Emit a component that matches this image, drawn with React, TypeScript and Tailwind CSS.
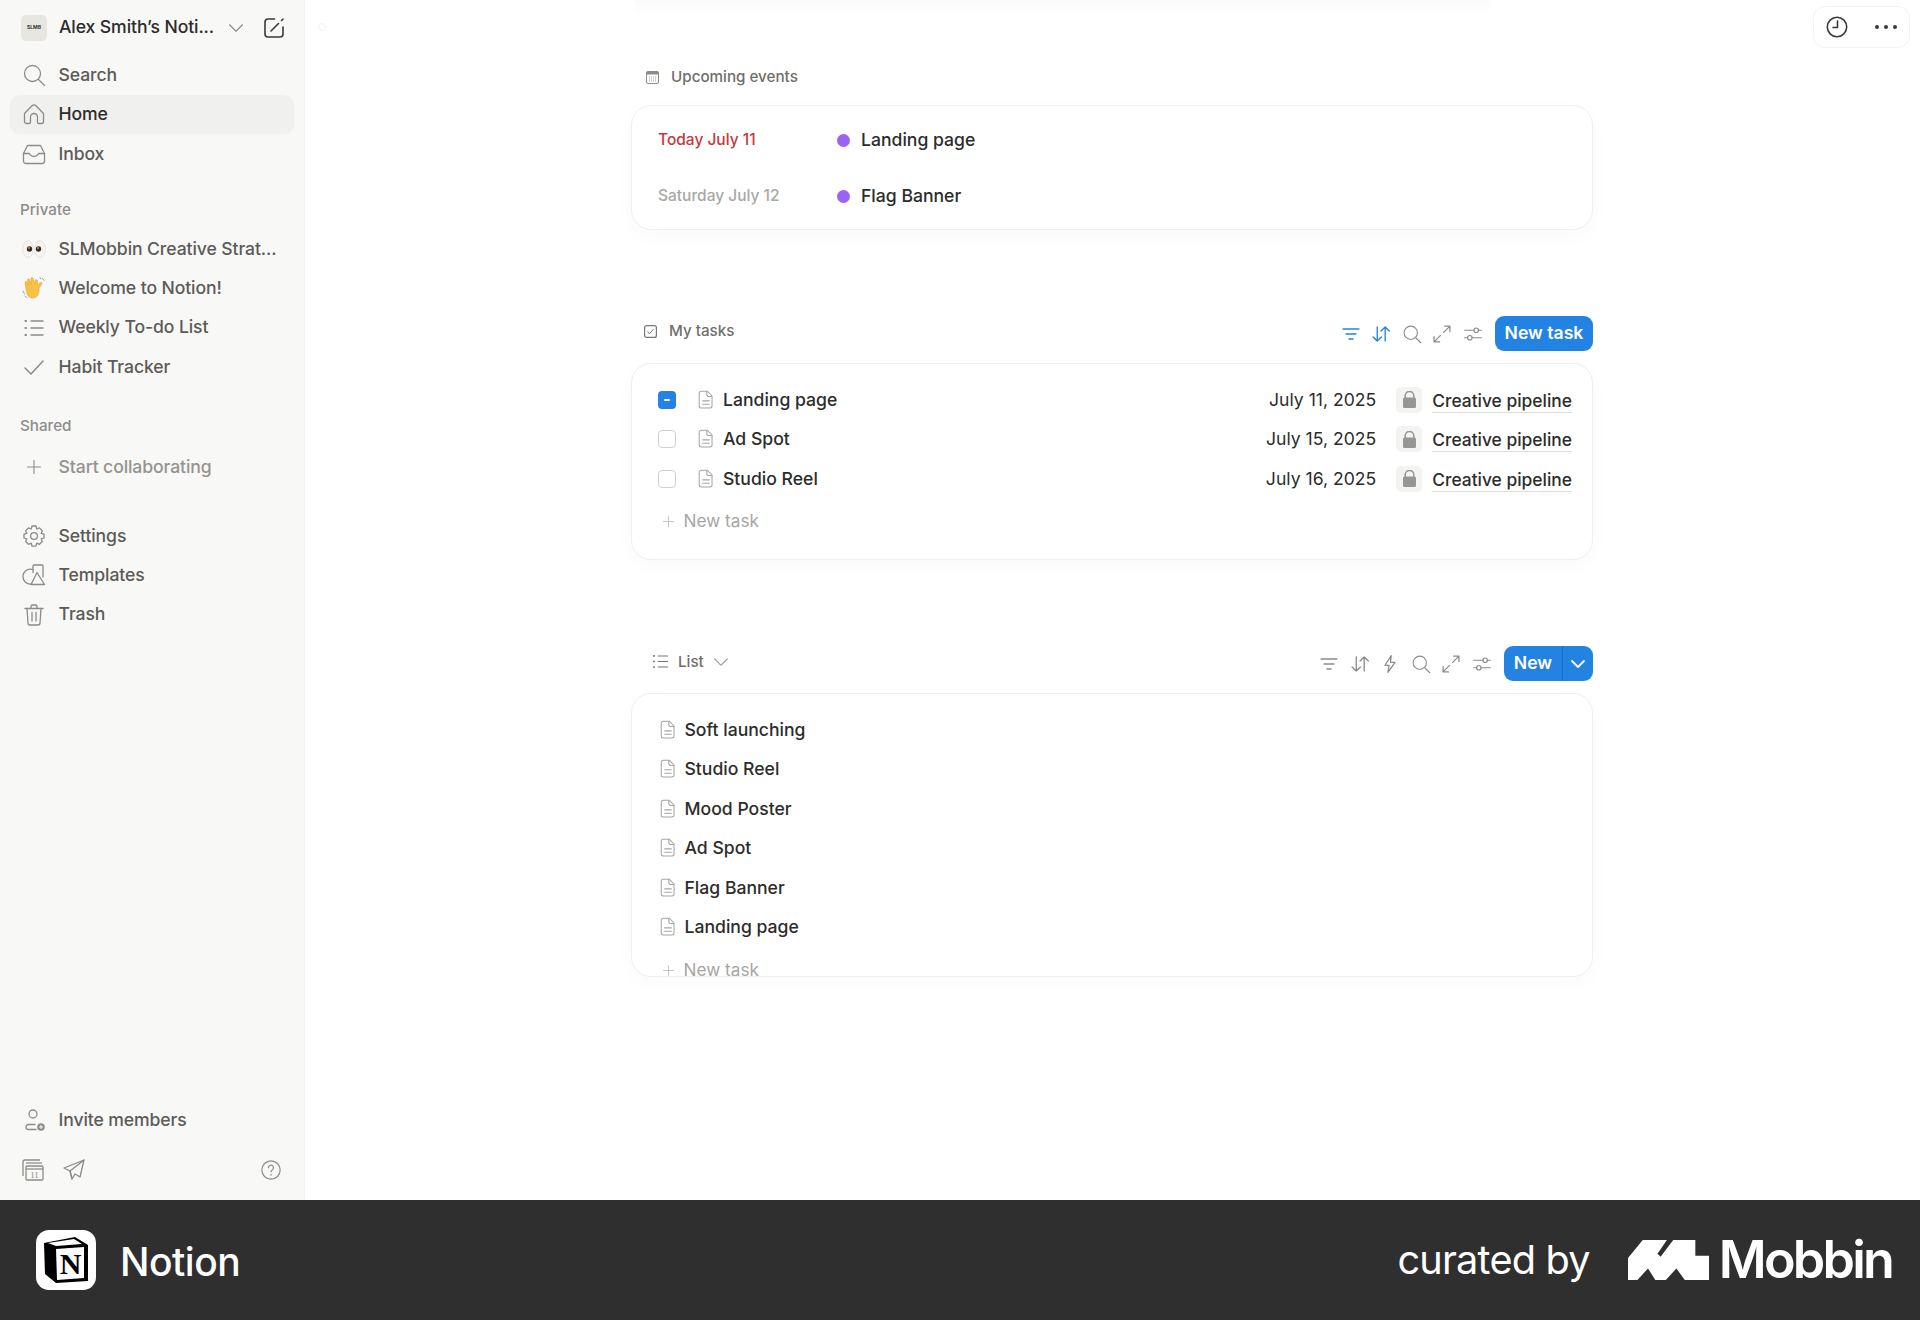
import React from "react";
import { ChevronDown, Plus } from "lucide-react";

const Svg: React.FC<{ size?: number; className?: string; sw?: number; vb?: number; children: React.ReactNode }> = ({
  size = 24,
  className = "text-[#8b8b88]",
  sw = 1.3,
  vb = 24,
  children,
}) => (
  <svg
    width={size}
    height={size}
    viewBox={`0 0 ${vb} ${vb}`}
    fill="none"
    stroke="currentColor"
    strokeWidth={sw}
    strokeLinecap="round"
    strokeLinejoin="round"
    className={`shrink-0 ${className}`}
  >
    {children}
  </svg>
);

const SearchIcon = ({ size = 24, className }: { size?: number; className?: string }) => (
  <Svg size={size} className={className}>
    <circle cx="10.5" cy="10.5" r="8" />
    <path d="M16.5 16.5 22.5 22.5" />
  </Svg>
);
const HomeIcon = () => (
  <Svg>
    <path d="M2.5 11.5 10 3.8a2.8 2.8 0 0 1 4 0l7.5 7.7v8a2 2 0 0 1-2 2h-2.7a1.3 1.3 0 0 1-1.3-1.3v-5.2a3.5 3.5 0 0 0-7 0v5.2a1.3 1.3 0 0 1-1.3 1.3H4.5a2 2 0 0 1-2-2z" />
  </Svg>
);
const InboxIcon = () => (
  <Svg>
    <path d="M5.5 3.5h13l4 8v7.5a2.5 2.5 0 0 1-2.500 2.500H4A2.500 2.500 0 0 1 1.500 19v-7.500z" />
    <path d="M1.500 11.500H7c1 0 1.200 3 5 3s4-3 5-3h5.500" />
  </Svg>
);
const ListIcon = ({ size = 24, className }: { size?: number; className?: string }) => (
  <Svg size={size} className={className} sw={1.4}>
    <path d="M9 5h12M9 12h12M9 19h12" />
    <path d="M3.500 5h.5M3.500 12h.5M3.500 19h.5" strokeWidth={2.2} />
  </Svg>
);
const GearIcon = () => (
  <Svg>
    <circle cx="12" cy="12" r="3.400" />
    <path d="M10 2h4l.8 3 2.700-1.100 2.800 2.800L19.200 9.400l2.800 .8v3.800l-2.800 .8 1.100 2.700-2.800 2.800-2.700-1.100-.8 3h-4l-.8-3-2.700 1.100-2.800-2.800 1.100-2.700L2 14v-3.800l2.800-.8L3.700 6.700l2.800-2.800L9.200 5z" />
  </Svg>
);
const TemplatesIcon = () => (
  <Svg>
    <path d="M11 6.500A7.500 7.500 0 1 0 9.500 21" />
    <path d="M11 9.500V3a1 1 0 0 1 1-1h8a1 1 0 0 1 1 1v11" />
    <path d="M15 9.500 22.500 21.500H9z" />
  </Svg>
);
const TrashIcon = () => (
  <Svg>
    <path d="M3 5.500h18M9 5V3.500A1.500 1.500 0 0 1 10.500 2h3A1.500 1.500 0 0 1 15 3.500V5" />
    <path d="M5 5.500 6 20a2 2 0 0 0 2 2h8a2 2 0 0 0 2-2l1-14.500" />
    <path d="M10 9.500v8.500M14 9.500v8.500" />
  </Svg>
);
const InviteIcon = () => (
  <Svg>
    <circle cx="11" cy="6" r="4" />
    <path d="M13 16.500H6.500a2.500 2.500 0 0 0 0 5H14" />
    <circle cx="19" cy="19" r="3.800" fill="currentColor" stroke="none" />
    <path d="M19 17.300v3.400M17.300 19h3.400" stroke="#f8f8f7" strokeWidth={1} />
  </Svg>
);
const FileIcon = () => (
  <Svg size={20} sw={1.3} className="text-[#a5a5a2]">
    <path d="M5.500 1.500h7.500l6 6v12.500a2.500 2.500 0 0 1-2.500 2.500h-11A2.500 2.500 0 0 1 3 20V4a2.500 2.500 0 0 1 2.500-2.500z" transform="translate(1 0) scale(.96)" />
    <path d="M13 1.800v4a2 2 0 0 0 2 2h4" />
    <path d="M8 13h8M8 17h8" />
  </Svg>
);
const FilterIcon = ({ className }: { className?: string }) => (
  <Svg size={20} sw={1.6} className={className}>
    <path d="M2.500 6h19M6 12h12M9.500 18h5" />
  </Svg>
);
const SortIcon = ({ className }: { className?: string }) => (
  <Svg size={20} sw={1.6} className={className}>
    <path d="M7.500 3.500v17M2.500 15.500l5 5 5-5" />
    <path d="M17 20.500v-17M12 8.500l5-5 5 5" />
  </Svg>
);
const BoltIcon = () => (
  <Svg size={20} sw={1.5}>
    <path d="M13.500 2 6 13.500h5L9.500 22 18 10h-5.500z" />
  </Svg>
);
const ExpandIcon = () => (
  <Svg size={20} sw={1.5}>
    <path d="M14 10 21.500 2.500M15 2.500h6.500V9" />
    <path d="M10 14 2.500 21.500M2.500 15v6.500H9" />
  </Svg>
);
const SlidersIcon = () => (
  <Svg size={20} sw={1.4}>
    <path d="M2 7.500h11M18.500 7.500H22M2 16.500h3.500M11 16.500h11" />
    <circle cx="15.800" cy="7.500" r="2.700" />
    <circle cx="8.200" cy="16.500" r="2.700" />
  </Svg>
);
const LockIcon = () => (
  <svg width="15" height="17" viewBox="0 0 15 17" className="shrink-0">
    <path d="M3.200 7V4.700a4.300 4.300 0 0 1 8.600 0V7" fill="none" stroke="#969694" strokeWidth="1.500" />
    <rect x="1" y="6.500" width="13" height="10.500" rx="1.500" fill="#969694" />
  </svg>
);

const Eyes = () => (
  <svg width="24" height="24" viewBox="0 0 24 24" className="shrink-0">
    <ellipse cx="6" cy="12" rx="5.300" ry="8.500" fill="#f6f4f0" stroke="#d9d6d0" strokeWidth=".6" />
    <ellipse cx="18" cy="12" rx="5.300" ry="8.500" fill="#f6f4f0" stroke="#d9d6d0" strokeWidth=".6" />
    <circle cx="7.500" cy="12" r="2.700" fill="#3d2a1c" />
    <circle cx="16.500" cy="12" r="2.700" fill="#3d2a1c" />
    <circle cx="7" cy="11" r=".7" fill="#fff" />
    <circle cx="16" cy="11" r=".7" fill="#fff" />
  </svg>
);

const Wave = () => (
  <svg width="24" height="24" viewBox="0 0 24 24" className="shrink-0">
    <path d="M4 12.500 3 6.800c-.3-1.500 1.700-2 2.200-.6l1 3 -.8-5c-.2-1.500 1.900-1.900 2.300-.4l1.300 4.700L8.900 2.900C8.700 1.400 10.800 1 11.200 2.500l1.700 5.800 .2-3.600c.2-1.500 2.200-1.400 2.300 .1l.5 4 2.200-2.300c1.100-1 2.500 .2 1.700 1.400l-2.800 4.400c.8 5-1.700 9.700-6.300 9.700-4.800 0-6.300-4.500-6.700-9.800z" fill="#f7c14a" stroke="#e5a12a" strokeWidth=".5" />
    <path d="M1 15l1.500 3M3 20l1.500 1.500M20.500 2.500l1.500 2M18 1.500l.8 1.500" stroke="#8d8d8a" strokeWidth=".8" fill="none" strokeLinecap="round" />
  </svg>
);

const NavRow: React.FC<{ icon: React.ReactNode; label: string; active?: boolean; muted?: boolean }> = ({
  icon,
  label,
  active,
  muted,
}) => (
  <div
    className={`flex h-[39.3px] items-center gap-[12.5px] rounded-[10px] px-3 text-[17.6px] font-medium tracking-[-0.1px] ${
      active ? "bg-[#f0f0ef] text-[#2c2c2b]" : muted ? "text-[#94938f]" : "text-[#5c5b58]"
    }`}
  >
    <span className="flex w-6 items-center justify-center">{icon}</span>
    <span className="whitespace-nowrap">{label}</span>
  </div>
);

const SectionLabel: React.FC<{ children: React.ReactNode }> = ({ children }) => (
  <div className="flex h-[39px] items-center px-[10px] pt-[1px] text-[15.2px] font-medium text-[#8d8c88]">{children}</div>
);

const Sidebar = () => (
  <aside className="flex h-full w-[305px] shrink-0 flex-col border-r border-[#f2f2f1] bg-[#f8f8f7] px-[10px] pt-[7.5px]">
    <div className="mb-[9px] flex h-[39px] items-center pl-[11px] pt-[1px]">
      <div className="flex h-[26px] w-[26px] shrink-0 items-center justify-center rounded-[5px] bg-[#e7e6e1] text-[5px] font-bold text-[#333]">
        SLMB
      </div>
      <span className="ml-3 w-[156px] shrink-0 whitespace-nowrap text-[17.6px] font-medium tracking-[-0.1px] text-[#2c2c2b]">
        Alex Smith’s Noti...
      </span>
      <ChevronDown size={26} strokeWidth={1} className="ml-[8px] shrink-0 text-[#8b8b88]" />
      <svg width="24" height="24" viewBox="0 0 24 24" fill="none" stroke="#3a3a38" strokeWidth="1.600" strokeLinecap="round" strokeLinejoin="round" className="ml-[13px] shrink-0">
        <path d="M12.500 3H6a3 3 0 0 0-3 3v12a3 3 0 0 0 3 3h12a3 3 0 0 0 3-3v-7" />
        <path d="M9 15 16.500 7.500" />
        <path d="M19.500 4.500 21 3" />
      </svg>
    </div>
    <NavRow icon={<SearchIcon />} label="Search" />
    <NavRow icon={<HomeIcon />} label="Home" active />
    <NavRow icon={<InboxIcon />} label="Inbox" />

    <div className="mt-[17px]">
      <SectionLabel>Private</SectionLabel>
    </div>
    <NavRow icon={<Eyes />} label="SLMobbin Creative Strat..." />
    <NavRow icon={<Wave />} label="Welcome to Notion!" />
    <NavRow icon={<ListIcon />} label="Weekly To-do List" />
    <NavRow
      icon={
        <Svg sw={1.5}>
          <path d="M3 13 9 19 21 6" />
        </Svg>
      }
      label="Habit Tracker"
    />

    <div className="mt-[20px]">
      <SectionLabel>Shared</SectionLabel>
    </div>
    <div className="mt-[2px]">
      <NavRow icon={<Plus size={22} strokeWidth={1.2} className="text-[#8b8b88]" />} label="Start collaborating" muted />
    </div>

    <div className="mt-[29.5px]">
      <NavRow icon={<GearIcon />} label="Settings" />
      <NavRow icon={<TemplatesIcon />} label="Templates" />
      <NavRow icon={<TrashIcon />} label="Trash" />
    </div>

    <div className="mt-auto">
      <NavRow icon={<InviteIcon />} label="Invite members" />
      <div className="mb-[11px] mt-[10px] flex h-[39px] items-center px-3">
        <svg width="22" height="22" viewBox="0 0 22 22" fill="none" stroke="#8b8b88" strokeWidth="1.300">
          <path d="M1 17V3a2 2 0 0 1 2-2h15" />
          <path d="M4 4h16" />
          <rect x="4" y="7" width="17" height="14" rx="1" />
          <path d="M4 10h17" />
          <text x="12.500" y="19" textAnchor="middle" fontFamily="'Liberation Serif', serif" fontSize="9" fill="#8b8b88" stroke="none">
            11
          </text>
        </svg>
        <svg width="22" height="22" viewBox="0 0 22 22" fill="none" stroke="#8b8b88" strokeWidth="1.300" strokeLinejoin="round" className="ml-[19px]">
          <path d="M21 1 1 9l6 3 2 8 3-5 5 3z" />
          <path d="M21 1 7 12l2 8" />
        </svg>
        <svg width="20" height="20" viewBox="0 0 24 24" fill="none" stroke="#8b8b88" strokeWidth="1.400" strokeLinecap="round" className="ml-auto mr-[1px]">
          <circle cx="12" cy="12" r="11" />
          <path d="M9 9.200a3 3 0 1 1 4.700 2.500c-1.100.7-1.700 1.300-1.700 2.600" />
          <path d="M12 17.800v.2" strokeWidth="1.800" />
        </svg>
      </div>
    </div>
  </aside>
);

const Card: React.FC<{ className: string; children: React.ReactNode }> = ({ className, children }) => (
  <div className={`overflow-hidden rounded-[20px] border border-[#efefee] bg-white shadow-[0_6px_20px_rgba(0,0,0,0.025)] ${className}`}>
    {children}
  </div>
);

const NewTaskRow = ({ className }: { className: string }) => (
  <div className={`flex h-[39px] items-center text-[17.2px] text-[#a6a6a3] ${className}`}>
    <Plus size={17} strokeWidth={1.1} className="ml-[1.5px] mr-[7px] text-[#b5b5b2]" />
    New task
  </div>
);

const tasks = [
  { name: "Landing page", date: "July 11, 2025", checked: true },
  { name: "Ad Spot", date: "July 15, 2025", checked: false },
  { name: "Studio Reel", date: "July 16, 2025", checked: false },
];

const listItems = ["Soft launching", "Studio Reel", "Mood Poster", "Ad Spot", "Flag Banner", "Landing page"];

const Main = () => (
  <main className="relative h-full flex-1 overflow-hidden bg-white">
    <div className="absolute left-[330px] right-[430px] top-0 h-[16px] bg-gradient-to-b from-[#fbfbfb] to-white" />
    <div className="absolute left-[13px] top-[23px] h-2 w-2 rounded-full border border-[#f2f2f2]" />

    <div className="absolute right-[10px] top-[6px] flex h-[42px] w-[97px] items-center justify-between rounded-[12px] border border-[#f3f3f2] pl-[12px] pr-[12px]">
      <svg width="22" height="22" viewBox="0 0 22 22" fill="none" stroke="#3a3a38" strokeWidth="1.600" strokeLinecap="round" strokeLinejoin="round">
        <circle cx="11" cy="11" r="9.700" />
        <path d="M11.500 5v6.500H7" />
      </svg>
      <div className="flex gap-[5px]">
        <span className="h-[4px] w-[4px] rounded-full bg-[#3a3a38]" />
        <span className="h-[4px] w-[4px] rounded-full bg-[#3a3a38]" />
        <span className="h-[4px] w-[4px] rounded-full bg-[#3a3a38]" />
      </div>
    </div>

    <div className="ml-[326px] flex w-[962px] flex-col pt-[60px]">
      <div className="flex h-[35px] items-center pl-[15px] text-[15.2px] font-medium text-[#6f6e6b]">
        <svg width="13" height="13" viewBox="0 0 13 13" className="mr-[12px]">
          <rect x=".5" y=".5" width="12" height="12" rx="1.500" fill="#fff" stroke="#8b8b88" />
          <rect x=".5" y=".5" width="12" height="3" fill="#8b8b88" />
          <path d="M3 6h7M3 8h7M3 10h7" stroke="#a5a5a2" strokeDasharray="1 1" />
        </svg>
        Upcoming events
      </div>
      <Card className="mt-[10px] h-[125px] pl-[26px] pt-[6.5px]">
        <div className="flex h-[56px] items-center">
          <span className="mb-[2px] w-[179px] text-[15.5px] font-medium text-[#c7383a]">Today July 11</span>
          <span className="h-[13px] w-[13px] rounded-full bg-[#9b62f5]" />
          <span className="ml-[11px] text-[17.6px] font-medium text-[#2c2c2b]">Landing page</span>
        </div>
        <div className="flex h-[56px] items-center">
          <span className="mb-[2px] w-[179px] text-[15.5px] font-medium text-[#a8a8a5]">Saturday July 12</span>
          <span className="h-[13px] w-[13px] rounded-full bg-[#9b62f5]" />
          <span className="ml-[11px] text-[17.6px] font-medium text-[#2c2c2b]">Flag Banner</span>
        </div>
      </Card>

      <div className="mt-[86px] flex h-[35px] items-center">
        <div className="mb-[4px] ml-[13px] flex items-center text-[15.2px] font-medium text-[#6f6e6b]">
          <svg width="13" height="13" viewBox="0 0 13 13" fill="none" className="mr-[12px]">
            <rect x=".6" y=".6" width="11.800" height="11.800" rx="2" stroke="#777" strokeWidth="1.200" />
            <path d="M3.500 6.500 5.500 8.800 9.500 4" stroke="#777" />
          </svg>
          My tasks
        </div>
        <div className="ml-auto flex items-center gap-[10.6px]">
          <FilterIcon className="text-[#2383e2]" />
          <SortIcon className="text-[#2383e2]" />
          <SearchIcon size={20} className="text-[#8b8b88]" />
          <ExpandIcon />
          <SlidersIcon />
          <div className="ml-[1.5px] flex h-[35px] w-[98px] items-center justify-center rounded-[9px] bg-[#2383e2] text-[17.6px] font-semibold text-white">
            New task
          </div>
        </div>
      </div>
      <Card className="mt-[12px] h-[197px] pl-[26px] pr-[20px] pt-[16px]">
        {tasks.map((t) => (
          <div key={t.name} className="flex h-[39.5px] items-center">
            {t.checked ? (
              <span className="flex h-[18px] w-[18px] items-center justify-center rounded-[4px] bg-[#2383e2]">
                <span className="h-[2px] w-[6px] rounded-full bg-white" />
              </span>
            ) : (
              <span className="h-[18px] w-[18px] rounded-[4px] border border-[#cfcfcd]" />
            )}
            <span className="ml-[20px]">
              <FileIcon />
            </span>
            <span className="ml-[7px] text-[17.6px] font-medium text-[#2c2c2b]">{t.name}</span>
            <span className="ml-auto text-[17.6px] text-[#2c2c2b]">{t.date}</span>
            <span className="ml-[20px] flex h-[26px] w-[26px] items-center justify-center rounded-[5px] bg-[#f3f3f2]">
              <LockIcon />
            </span>
            <span className="ml-[10px] mt-[3px] border-b border-[#dededc] text-[17.4px] font-medium leading-[22px] text-[#2c2c2b]">
              Creative pipeline
            </span>
          </div>
        ))}
        <NewTaskRow className="mt-[3px]" />
      </Card>

      <div className="mt-[86px] flex h-[35px] items-center">
        <div className="mb-[3px] ml-[20px] flex items-center text-[15.2px] font-medium text-[#6f6e6b]">
          <ListIcon size={19} className="mr-[8px] text-[#777]" />
          List
          <ChevronDown size={26} strokeWidth={1} className="my-[-4px] ml-[4px] text-[#a5a5a2]" />
        </div>
        <div className="ml-auto flex items-center gap-[10.6px]">
          <FilterIcon className="text-[#8b8b88]" />
          <SortIcon className="text-[#8b8b88]" />
          <BoltIcon />
          <SearchIcon size={20} className="text-[#8b8b88]" />
          <ExpandIcon />
          <SlidersIcon />
          <div className="ml-[1.5px] flex h-[35px] w-[89px] items-center rounded-[9px] bg-[#2383e2] text-[17.6px] font-semibold text-white">
            <span className="flex w-[58px] justify-center">New</span>
            <span className="flex flex-1 items-center justify-center self-stretch border-l border-[#1b6fc2]">
              <ChevronDown size={24} strokeWidth={1.800} />
            </span>
          </div>
        </div>
      </div>
      <Card className="mt-[12px] h-[284px] pl-[26px] pt-[16px]">
        {listItems.map((name) => (
          <div key={name} className="flex h-[39.5px] items-center">
            <FileIcon />
            <span className="ml-[6.5px] text-[17.6px] font-medium text-[#2c2c2b]">{name}</span>
          </div>
        ))}
        <NewTaskRow className="mt-[3.5px]" />
      </Card>
    </div>
  </main>
);

const NotionLogo = () => (
  <div className="flex h-[60px] w-[60px] items-center justify-center rounded-[13px] bg-white">
    <svg width="46" height="48" viewBox="0 0 46 48">
      <path d="M1 7 32 1l13 8v36L13 47 2 38z" fill="#000" />
      <path d="M5 7 31 3l8 5-26 2z" fill="#fff" />
      <path d="M13 13 41 11v31l-27 2z" fill="#fff" />
      <text x="27.500" y="38" textAnchor="middle" fontFamily="'Liberation Serif', serif" fontWeight="700" fontSize="30" fill="#000">
        N
      </text>
    </svg>
  </div>
);

const Footer = () => (
  <footer className="flex h-[120px] items-center justify-between bg-[#2f2f2f] pl-[36px] pr-[28px] text-white">
    <div className="flex items-center">
      <NotionLogo />
      <span className="ml-[24px] mt-[4px] text-[39px] font-medium tracking-[-0.5px]">Notion</span>
    </div>
    <div className="flex items-center">
      <span className="mt-[2px] text-[39.7px] font-normal tracking-[-0.8px]">curated by</span>
      <svg width="81" height="40" viewBox="0 0 77 38" fill="#fff" className="ml-[38px]">
        <path d="M0 17 14 0H37L28 13 31 16 43 0H64V15H77V38H54L46 27 36 38H26L19 27 9 38H0Z" />
      </svg>
      <span className="ml-[10px] text-[52px] font-semibold leading-none tracking-[-2.800px]">Mobbin</span>
    </div>
  </footer>
);

export default function App() {
  return (
    <div className="flex h-[1320px] w-full flex-col font-['Inter',sans-serif]">
      <div className="flex h-[1200px]">
        <Sidebar />
        <Main />
      </div>
      <Footer />
    </div>
  );
}
